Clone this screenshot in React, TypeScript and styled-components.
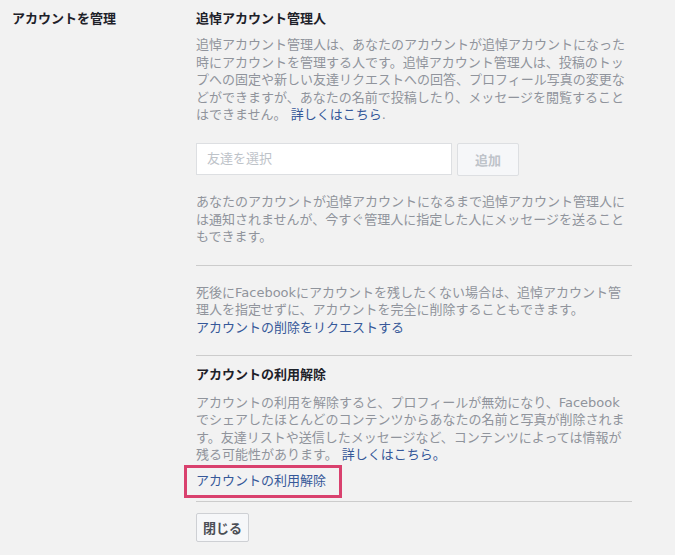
import React from "react";
import styled, { createGlobalStyle } from "styled-components";

const Global = createGlobalStyle`
  html, body {
    margin: 0;
    padding: 0;
    background: #f2f2f2;
  }
  body {
    font-family: "DejaVu Sans", "Noto Sans CJK JP", "Liberation Sans", sans-serif;
    font-size: 13px;
    -webkit-font-smoothing: antialiased;
  }
`;

const Page = styled.div`
  display: grid;
  grid-template-columns: 184px 436px;
  padding: 10px 0 0 12px;
  min-height: 545px;
`;

const SideLabel = styled.div`
  font-weight: bold;
  color: #1d2129;
  line-height: 18px;
`;

const Column = styled.div`
  display: flex;
  flex-direction: column;
  align-items: flex-start;
`;

const Title = styled.div<{ $mb?: number }>`
  font-weight: bold;
  color: #1d2129;
  line-height: 18px;
  margin-bottom: ${(p) => p.$mb ?? 10}px;
`;

const Text = styled.p<{ $mb?: number }>`
  margin: 0 0 ${(p) => p.$mb ?? 0}px 0;
  color: #90949c;
  line-height: 17.6px;
  width: 436px;
`;

const Link = styled.a`
  color: #365899;
  text-decoration: none;
  cursor: pointer;
`;

const Row = styled.div`
  display: flex;
  gap: 5px;
  margin-bottom: 17px;
`;

const Input = styled.input`
  box-sizing: border-box;
  width: 256px;
  height: 32px;
  border: 1px solid #dddfe2;
  background: #fff;
  padding: 0 10px;
  font-family: inherit;
  font-size: 13px;
  outline: none;
  &::placeholder {
    color: #bec3c9;
  }
`;

const Button = styled.button<{ $disabled?: boolean; $w: number; $h: number }>`
  box-sizing: border-box;
  width: ${(p) => p.$w}px;
  height: ${(p) => p.$h}px;
  border: 1px solid ${(p) => (p.$disabled ? "#dddfe2" : "#ced0d4")};
  border-radius: 2px;
  background: #f6f7f9;
  color: ${(p) => (p.$disabled ? "#bec3c9" : "#4b4f56")};
  font-family: inherit;
  font-size: 13px;
  font-weight: bold;
  padding: 0;
  cursor: pointer;
`;

const Divider = styled.hr<{ $top: number; $bottom: number }>`
  align-self: stretch;
  border: 0;
  border-top: 1px solid #cccccc;
  margin: ${(p) => p.$top}px 0 ${(p) => p.$bottom}px 0;
`;

const Highlight = styled.div`
  margin-left: -12px;
  margin-top: 1px;
  border: 3px solid #d9416e;
  padding: 4px 13px 5px 9px;
  line-height: 18px;
`;

export default function App() {
  return (
    <>
      <Global />
      <Page>
        <SideLabel>アカウントを管理</SideLabel>
        <Column>
          <Title $mb={8}>追悼アカウント管理人</Title>
          <Text $mb={19}>
            追悼アカウント管理人は、あなたのアカウントが追悼アカウントになった時にアカウントを管理する人です。追悼アカウント管理人は、投稿のトップへの固定や新しい友達リクエストへの回答、プロフィール写真の変更などができますが、あなたの名前で投稿したり、メッセージを閲覧することはできません。
            {" "}
            <Link>詳しくはこちら</Link>
            <span>.</span>
          </Text>
          <Row>
            <Input placeholder="友達を選択" />
            <Button $disabled $w={62} $h={33}>
              追加
            </Button>
          </Row>
          <Text>
            あなたのアカウントが追悼アカウントになるまで追悼アカウント管理人には通知されませんが、今すぐ管理人に指定した人にメッセージを送ることもできます。
          </Text>
          <Divider $top={19} $bottom={18} />
          <Text>
            死後にFacebookにアカウントを残したくない場合は、追悼アカウント管理人を指定せずに、アカウントを完全に削除することもできます。
            <br />
            <Link>アカウントの削除をリクエストする</Link>
          </Text>
          <Divider $top={18} $bottom={10} />
          <Title $mb={10}>アカウントの利用解除</Title>
          <Text>
            アカウントの利用を解除すると、プロフィールが無効になり、Facebookでシェアしたほとんどのコンテンツからあなたの名前と写真が削除されます。友達リストや送信したメッセージなど、コンテンツによっては情報が残る可能性があります。
            {" "}
            <Link>詳しくはこちら。</Link>
          </Text>
          <Highlight>
            <Link>アカウントの利用解除</Link>
          </Highlight>
          <Divider $top={3} $bottom={11} />
          <Button $w={53} $h={29}>
            閉じる
          </Button>
        </Column>
      </Page>
    </>
  );
}
